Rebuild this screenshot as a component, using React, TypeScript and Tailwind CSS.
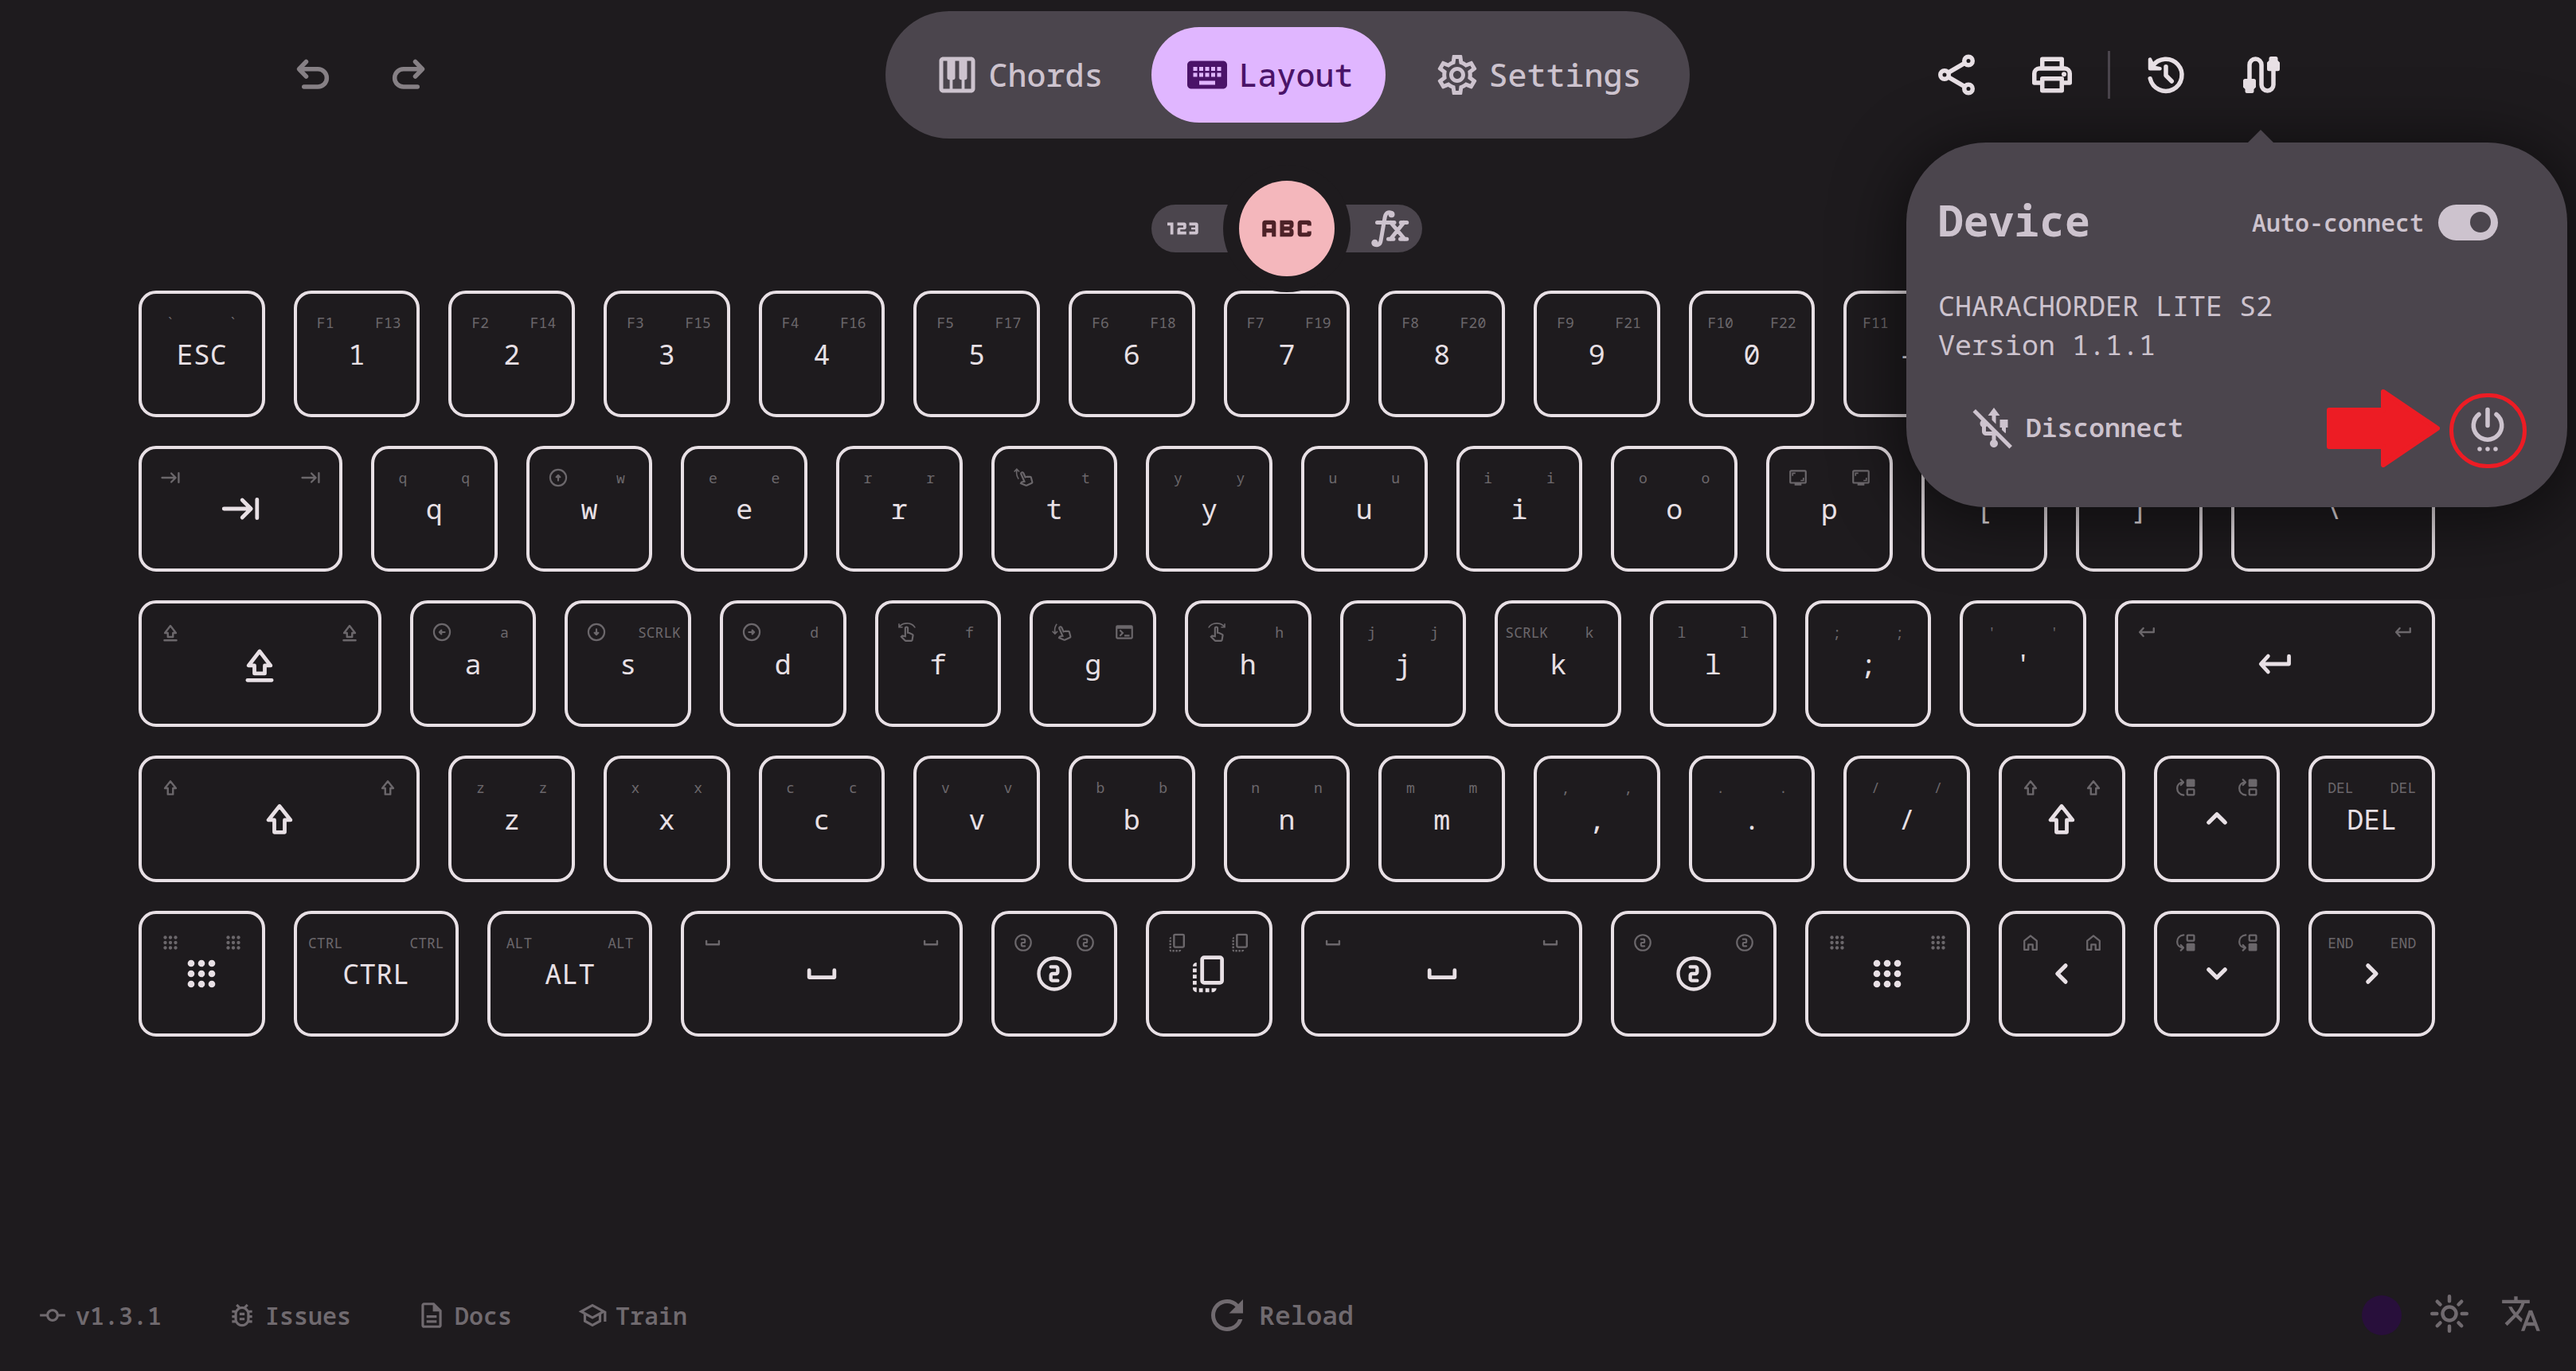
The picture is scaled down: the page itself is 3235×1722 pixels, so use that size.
import React from "react";
import {
  Md123,
  MdAbc,
  MdCommit,
  MdKeyboard,
  MdOutlineBugReport,
  MdOutlineDescription,
  MdOutlineSchool,
  MdOutlineScreenshotMonitor,
  MdOutlineSettings,
  MdOutlineSwipeDown,
  MdOutlineSwipeLeft,
  MdOutlineSwipeRight,
  MdOutlineSwipeUp,
  MdPiano,
  MdRefresh,
  MdTerminal,
  MdTranslate,
  MdUsbOff,
} from "react-icons/md";
import { TbCircleNumber2 } from "react-icons/tb";

type IconProps = { className?: string };

function Line({ className = "", children, width = 2.2 }: IconProps & { children: React.ReactNode; width?: number }) {
  return (
    <svg
      viewBox="0 0 24 24"
      aria-hidden="true"
      className={className}
      fill="none"
      stroke="currentColor"
      strokeWidth={width}
      strokeLinecap="round"
      strokeLinejoin="round"
    >
      {children}
    </svg>
  );
}

const Undo = (p: IconProps) => (
  <Line {...p}>
    <path d="M8.6 5.4 5 9.1l3.6 3.7M5.4 9.1h9.1a4.45 4.45 0 0 1 0 8.9H7.5" />
  </Line>
);
const Redo = (p: IconProps) => (
  <Line {...p}>
    <path d="M15.4 5.4 19 9.1l-3.6 3.7M18.6 9.1H9.5a4.45 4.45 0 0 0 0 8.9h7" />
  </Line>
);
const Share = (p: IconProps) => (
  <Line {...p}>
    <path d="M6 12 18 5M6 12l12 7" />
    <g fill="#1e1b1e">
      <circle cx="18" cy="5" r="2.1" />
      <circle cx="18" cy="19" r="2.1" />
      <circle cx="6" cy="12" r="2.1" />
    </g>
  </Line>
);
const Print = (p: IconProps) => (
  <Line {...p}>
    <path d="M7.1 8.5V4.1h9.8v4.4M7.1 16h-4v-4.7a2.5 2.5 0 0 1 2.5-2.5h12.8a2.5 2.5 0 0 1 2.5 2.5V16h-4M7.1 13.9h9.8v6H7.1z" />
    <circle cx="18" cy="11.7" r="1.2" fill="currentColor" stroke="none" />
  </Line>
);
const History = (p: IconProps) => (
  <Line {...p}>
    <path d="M4.1 13.9A8.05 8.05 0 1 0 5.3 7.6M12 7.9v4.4l2.9 2.9" />
    <path d="M4 4.2v4.7h5L6 8.3z" fill="currentColor" strokeWidth="1.800" />
  </Line>
);
const Cable = (p: IconProps) => (
  <Line {...p}>
    <path d="M6 14V7a3 3 0 0 1 6 0v10a3 3 0 0 0 6 0v-7" />
    <path
      d="M3.8 14h4.400a1 1 0 0 1 1 1v3.200l-1 1V20.200a1 1 0 0 1-1 1h-2.400a1 1 0 0 1-1-1v-1l-1-1V15a1 1 0 0 1 1-1zM16.800 2.800h2.400a1 1 0 0 1 1 1v1l1 1V9.100a1 1 0 0 1-1 1h-4.400a1 1 0 0 1-1-1V5.800l1-1v-1a1 1 0 0 1 1-1z"
      fill="currentColor"
      stroke="none"
    />
  </Line>
);
const Power = (p: IconProps) => (
  <Line {...p}>
    <path d="M12 3v8M7.6 5.4a7.1 7.1 0 1 0 8.800 0" />
    <g fill="currentColor" stroke="none">
      <circle cx="8" cy="22.8" r="1.1" />
      <circle cx="12" cy="22.8" r="1.1" />
      <circle cx="16" cy="22.8" r="1.1" />
    </g>
  </Line>
);
const FunctionIcon = (p: IconProps) => (
  <Line {...p} width={2}>
    <path d="M4 20c1.600.8 2.900 0 3.200-1.800L9.300 6.200c.4-2 1.600-2.700 3.300-2.100M5.400 9H11M12.200 9l7 8.300M18.800 9l-6.700 8.300M11.500 9h2.500M17.300 9h3M11 17.300h2.600M17 17.300h3.300" />
    <g fill="currentColor" stroke="none">
      <circle cx="4.2" cy="19.2" r="1.7" />
      <circle cx="12.6" cy="4.9" r="1.6" />
    </g>
  </Line>
);
const Sun = (p: IconProps) => (
  <Line {...p} width={1.8}>
    <circle cx="12" cy="12" r="3.4" />
    <path d="M12 3.300v2.400M12 18.300v2.400M3.300 12h2.400M18.300 12h2.400M5.900 5.900l1.500 1.500M16.600 16.600l1.500 1.500M5.900 18.100l1.500-1.500M16.600 7.400l1.500-1.500" />
  </Line>
);

const Tab = (p: IconProps) => (
  <Line {...p}>
    <path d="M2.400 12h15M13 6.900l5.100 5.100-5.100 5.100M21.600 6.600v10.800" />
  </Line>
);
const Caps = (p: IconProps) => (
  <Line {...p}>
    <path d="M12 4.600 5.600 12.900H9v4.600h6v-4.600h3.400zM5 21.400h14" />
  </Line>
);
const Shift = (p: IconProps) => (
  <Line {...p}>
    <path d="M12 4.800 5.600 12.900H9V20h6v-7.100h3.400z" />
  </Line>
);
const Apps = (p: IconProps) => (
  <svg viewBox="0 0 24 24" aria-hidden="true" className={p.className} fill="currentColor">
    {[6, 12, 18].map((y) => [6, 12, 18].map((x) => <circle key={`${x}-${y}`} cx={x} cy={y} r="2" />))}
  </svg>
);
const Space = (p: IconProps) => (
  <Line {...p}>
    <path d="M4.700 10v4.100h14.600V10" />
  </Line>
);
const Flip = (p: IconProps) => (
  <svg viewBox="0 0 24 24" aria-hidden="true" className={p.className} fill="currentColor">
    <rect x="7.7" y="2.6" width="11.5" height="14.6" rx="1.2" fill="none" stroke="currentColor" strokeWidth="2.2" />
    <path d="M2.300 7.700a2.200 2.200 0 0 1 2.200-2.200v2.200zM2.300 9h2.200v2.200H2.300zM2.300 12.600h2.200v2.200H2.300zM2.300 16.200h2.200v2.200H2.300zM2.300 20h2.200v2.700a2.200 2.200 0 0 1-2.200-2.200zM5.900 20.400h2.200v2.300H5.900zM9.600 20.400h2.200v2.300H9.600zM13.200 20.400h2.800a2.300 2.300 0 0 1-2.300 2.300h-.5z" />
  </svg>
);
const Up = (p: IconProps) => (
  <Line {...p} width={2.4}>
    <path d="M7.300 14.300 12 9.600l4.700 4.700" />
  </Line>
);
const Down = (p: IconProps) => (
  <Line {...p} width={2.4}>
    <path d="M7.300 9.600 12 14.300l4.700-4.700" />
  </Line>
);
const Left = (p: IconProps) => (
  <Line {...p} width={2.4}>
    <path d="M14.300 7.300 9.600 12l4.700 4.700" />
  </Line>
);
const Right = (p: IconProps) => (
  <Line {...p} width={2.4}>
    <path d="m9.600 7.300 4.700 4.700-4.700 4.700" />
  </Line>
);
const Return = (p: IconProps) => (
  <Line {...p}>
    <path d="M8 7.400 3.800 12 8 16.600M4.200 12h15.900V7.500" />
  </Line>
);
const Home = (p: IconProps) => (
  <Line {...p} width={2.1}>
    <path d="M4.800 9.800v10.400h4.700v-6h5v6h4.700V9.800L12 4z" />
  </Line>
);

function CircleArrow({ className, turn }: IconProps & { turn: number }) {
  return (
    <Line className={className} width={2}>
      <circle cx="12" cy="12" r="9.3" />
      <g transform={`rotate(${turn} 12 12)`} fill="currentColor">
        <path d="M12 15.300v-5M9.800 11.300 12 9.100l2.200 2.200z" />
      </g>
    </Line>
  );
}
const MouseUp = (p: IconProps) => <CircleArrow {...p} turn={0} />;
const MouseRight = (p: IconProps) => <CircleArrow {...p} turn={90} />;
const MouseDown = (p: IconProps) => <CircleArrow {...p} turn={180} />;
const MouseLeft = (p: IconProps) => <CircleArrow {...p} turn={270} />;

function MoveSelection({ className, flip }: IconProps & { flip: boolean }) {
  return (
    <Line className={className} width={2.1}>
      <g transform={flip ? "matrix(1 0 0 -1 0 24)" : undefined}>
        <rect x="12.6" y="2.4" width="10" height="9" rx="1.4" fill="currentColor" stroke="none" />
        <rect x="13.6" y="14.2" width="8" height="6.4" rx=".8" />
        <path d="M9.500 20.800C4.600 20.400 2 16.900 2 12.900 2 9.200 4.500 6.400 8.600 6.100M6.200 3 9.200 6.100l-3 3.100" />
      </g>
    </Line>
  );
}
const MoveUp = (p: IconProps) => <MoveSelection {...p} flip={false} />;
const MoveDown = (p: IconProps) => <MoveSelection {...p} flip />;

type Legend = string | React.ComponentType<IconProps>;
type KeyDef = { main: Legend; a: Legend; b: Legend; span?: number };

const k = (main: Legend, a: Legend = main, b: Legend = a, span = 4): KeyDef => ({ main, a, b, span });

const keys: KeyDef[] = [
  k("ESC", "`"),
  k("1", "F1", "F13"),
  k("2", "F2", "F14"),
  k("3", "F3", "F15"),
  k("4", "F4", "F16"),
  k("5", "F5", "F17"),
  k("6", "F6", "F18"),
  k("7", "F7", "F19"),
  k("8", "F8", "F20"),
  k("9", "F9", "F21"),
  k("0", "F10", "F22"),
  k("-", "F11", ""),
  k(""),
  k("", "", "", 8),

  k(Tab, Tab, Tab, 6),
  k("q"),
  k("w", MouseUp, "w"),
  k("e"),
  k("r"),
  k("t", MdOutlineSwipeUp, "t"),
  k("y"),
  k("u"),
  k("i"),
  k("o"),
  k("p", MdOutlineScreenshotMonitor),
  k("[", ""),
  k("]", ""),
  k("\\", "", "", 6),

  k(Caps, Caps, Caps, 7),
  k("a", MouseLeft, "a"),
  k("s", MouseDown, "SCRLK"),
  k("d", MouseRight, "d"),
  k("f", MdOutlineSwipeLeft, "f"),
  k("g", MdOutlineSwipeDown, MdTerminal),
  k("h", MdOutlineSwipeRight, "h"),
  k("j"),
  k("k", "SCRLK", "k"),
  k("l"),
  k(";"),
  k("'"),
  k(Return, Return, Return, 9),

  k(Shift, Shift, Shift, 8),
  k("z"),
  k("x"),
  k("c"),
  k("v"),
  k("b"),
  k("n"),
  k("m"),
  k(","),
  k("."),
  k("/"),
  k(Shift),
  k(Up, MoveUp),
  k("DEL"),

  k(Apps),
  k("CTRL", "CTRL", "CTRL", 5),
  k("ALT", "ALT", "ALT", 5),
  k(Space, Space, Space, 8),
  k(TbCircleNumber2),
  k(Flip),
  k(Space, Space, Space, 8),
  k(TbCircleNumber2, TbCircleNumber2, TbCircleNumber2, 5),
  k(Apps, Apps, Apps, 5),
  k(Left, Home),
  k(Down, MoveDown),
  k(Right, "END"),
];

const spans: Record<number, string> = {
  4: "col-span-4",
  5: "col-span-5",
  6: "col-span-6",
  7: "col-span-7",
  8: "col-span-8",
  9: "col-span-9",
};

function Mark({ value, className }: { value: Legend; className: string }) {
  if (typeof value === "string") return <>{value}</>;
  const Icon = value;
  return <Icon className={className} />;
}

function Key({ main, a, b, span = 4 }: KeyDef) {
  return (
    <button
      type="button"
      className={`${spans[span]} m-[18px] grid min-w-0 rounded-[22px] border-4 border-[#e8e0e5] text-[#e8e0e5]`}
    >
      <span className="col-start-1 row-start-1 flex justify-between self-start text-[18px] leading-none text-[#6b676b]">
        <span className="flex size-[72px] items-center justify-center">
          <Mark value={a} className="size-[26px]" />
        </span>
        <span className="flex size-[72px] items-center justify-center">
          <Mark value={b} className="size-[26px]" />
        </span>
      </span>
      <span className="col-start-1 row-start-1 flex items-center justify-center text-[35px] leading-none">
        <Mark value={main} className="size-[52px]" />
      </span>
    </button>
  );
}

function IconButton({ label, className = "", children }: { label: string; className?: string; children: React.ReactNode }) {
  return (
    <button type="button" aria-label={label} className={`flex size-[120px] items-center justify-center ${className}`}>
      {children}
    </button>
  );
}

function NavItem({ icon: Icon, text, active = false }: { icon: React.ComponentType<IconProps>; text: string; active?: boolean }) {
  return (
    <a
      href={`#${text.toLowerCase()}`}
      className={`flex h-[120px] items-center gap-[10px] rounded-full px-[40px] text-[40px] font-medium ${
        active ? "bg-[#e0b6ff] text-[#4a1368]" : ""
      }`}
    >
      <Icon className="size-[60px]" />
      {text}
    </a>
  );
}

function FooterLink({ icon: Icon, text }: { icon: React.ComponentType<IconProps>; text: string }) {
  return (
    <a href={`#${text.toLowerCase()}`} className="flex items-center gap-[10px] text-[30px] font-semibold">
      <Icon className="size-[38px]" />
      {text}
    </a>
  );
}

function DevicePopup() {
  return (
    <section
      aria-label="Device"
      className="absolute top-[179px] right-[11px] z-20 w-[830px] rounded-[100px] bg-[#4b454d] p-[40px] text-[#cdc3ce] shadow-[0_10px_80px_10px_rgba(0,0,0,0.5)]"
    >
      <svg viewBox="0 0 34 17" aria-hidden="true" className="absolute -top-[16px] right-[368px] h-[17px] w-[34px]">
        <path d="M17 0 34 17H0z" fill="#4b454d" />
      </svg>
      <div className="flex h-[120px] items-center justify-between pr-[47px]">
        <h2 className="pb-[6px] text-[53px] leading-none font-bold">Device</h2>
        <label className="flex items-center gap-[18px] text-[30px] font-semibold">
          Auto-connect
          <input
            type="checkbox"
            role="switch"
            defaultChecked
            className="flex h-[45px] w-[75px] appearance-none items-center justify-end rounded-full bg-[#cdc3ce] pr-[9px] before:size-[26px] before:rounded-full before:bg-[#4b454d]"
          />
        </label>
      </div>
      <p className="my-[20px] text-[35px] leading-[49px]">
        CHARACHORDER LITE S2
        <br />
        Version 1.1.1
      </p>
      <div className="flex items-center justify-between">
        <button type="button" className="flex h-[120px] items-center gap-[10px] px-[40px] text-[33px] font-semibold">
          <MdUsbOff className="size-[60px]" />
          Disconnect
        </button>
        <IconButton label="Power options">
          <Power className="size-[60px] overflow-visible" />
        </IconButton>
      </div>
      <svg viewBox="0 0 142 98" aria-hidden="true" className="absolute top-[310px] right-[160px] h-[98px] w-[142px]">
        <path
          d="M3 26h68V3l68 46-68 46V72H3z"
          fill="#ed1c24"
          stroke="#ed1c24"
          strokeWidth="6"
          strokeLinejoin="round"
        />
      </svg>
      <span className="pointer-events-none absolute top-[315px] right-[51px] h-[94px] w-[97px] rounded-full border-[5px] border-[#ed1c24]" />
    </section>
  );
}

export default function App() {
  return (
    <div className="relative flex min-h-screen flex-col overflow-hidden bg-[#1e1b1e] pr-[3px] font-[family-name:Noto_Sans_Mono,DejaVu_Sans_Mono,monospace] text-[#e8e0e5]">
      <header className="grid grid-cols-[1fr_auto_1fr] items-center pt-[14px] pr-[332px] pl-[333px]">
        <div className="flex text-[#868085]">
          <IconButton label="Undo">
            <Undo className="size-[60px]" />
          </IconButton>
          <IconButton label="Redo">
            <Redo className="size-[60px]" />
          </IconButton>
        </div>
        <nav className="flex gap-[20px] rounded-full bg-[#4b454d] p-[20px] text-[#cdc3ce]">
          <NavItem icon={MdPiano} text="Chords" />
          <NavItem icon={MdKeyboard} text="Layout" active />
          <NavItem icon={MdOutlineSettings} text="Settings" />
        </nav>
        <div className="flex items-center justify-end">
          <IconButton label="Share">
            <Share className="size-[60px]" />
          </IconButton>
          <IconButton label="Print">
            <Print className="size-[60px]" />
          </IconButton>
          <span className="mx-[10px] h-[60px] w-[3px] bg-[#4b454d]" />
          <IconButton label="History">
            <History className="size-[60px]" />
          </IconButton>
          <IconButton label="Device">
            <Cable className="size-[60px]" />
          </IconButton>
        </div>
      </header>

      <DevicePopup />

      <main>
        <div role="group" aria-label="Layer" className="relative z-10 mt-[53px] flex items-center justify-center text-[#cdc3ce]">
          <button
            type="button"
            aria-label="Number layer"
            className="flex h-[60px] w-[110px] items-center rounded-l-full bg-[#4b454d] pl-[10px]"
          >
            <Md123 className="size-[60px]" />
          </button>
          <button
            type="button"
            aria-label="Letter layer"
            className="z-10 flex size-[120px] items-center justify-center rounded-full bg-[#f4b7bc] text-[#4c2227] shadow-[0_0_0_20px_#1e1b1e]"
          >
            <MdAbc className="size-[82px]" />
          </button>
          <button
            type="button"
            aria-label="Function layer"
            className="flex h-[60px] w-[110px] items-center justify-end rounded-r-full bg-[#4b454d] pr-[10px]"
          >
            <FunctionIcon className="size-[60px]" />
          </button>
        </div>
        <div className="px-[156px]">
          <div className="grid aspect-[3/1] grid-cols-[repeat(60,minmax(0,1fr))] grid-rows-5">
            {keys.map((key, i) => (
              <Key key={i} {...key} />
            ))}
          </div>
        </div>
      </main>

      <footer className="mt-auto mb-[10px] grid h-[120px] grid-cols-[1fr_auto_1fr] items-center pr-[36px] pl-[47px] text-[#706a6f]">
        <div className="flex gap-[82px]">
          <FooterLink icon={MdCommit} text="v1.3.1" />
          <FooterLink icon={MdOutlineBugReport} text="Issues" />
          <FooterLink icon={MdOutlineDescription} text="Docs" />
          <FooterLink icon={MdOutlineSchool} text="Train" />
        </div>
        <button type="button" className="mr-[32px] flex items-center gap-[10px] text-[33px] font-semibold">
          <MdRefresh className="size-[60px]" />
          Reload
        </button>
        <div className="flex items-center justify-end gap-[30px]">
          <button type="button" aria-label="Accent colour" className="size-[50px] rounded-full bg-[#280f3b]" />
          <button type="button" aria-label="Light mode" className="pb-[4px]">
            <Sun className="size-[60px]" />
          </button>
          <button type="button" aria-label="Language" className="flex size-[60px] items-center justify-center pb-[4px]">
            <MdTranslate className="size-[52px]" />
          </button>
        </div>
      </footer>
    </div>
  );
}
